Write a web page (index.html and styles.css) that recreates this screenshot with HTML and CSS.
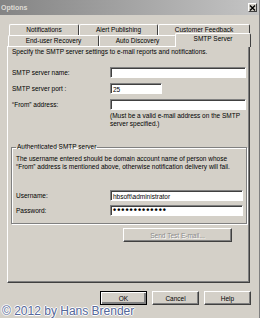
FILE: index.html
```html
<!DOCTYPE html>
<html lang="en">
  <head>
    <meta charset="UTF-8" />
    <title>Options</title>
    <link rel="stylesheet" href="styles.css">
  </head>
  <body>
    <div class="window">
      <div class="titlebar">
        <span class="title">Options</span>
        <span class="close-btn">
          <svg width="7" height="6" viewBox="0 0 7 6">
            <path d="M1 0.5 L6 5.5 M6 0.5 L1 5.5" stroke="#000" stroke-width="1.4" />
          </svg>
        </span>
      </div>

      <div class="tabs">
        <div class="tab-row tab-row-back">
          <div class="tab tab-notify">Notifications</div>
          <div class="tab tab-alert">Alert Publishing</div>
          <div class="tab tab-feedback">Customer Feedback</div>
        </div>
        <div class="tab-row tab-row-front">
          <div class="tab tab-recovery">End-user Recovery</div>
          <div class="tab tab-discovery">Auto Discovery</div>
          <div class="tab tab-smtp active">SMTP Server</div>
        </div>
      </div>

      <div class="panel">
        <p class="desc">Specify the SMTP server settings to e-mail reports and notifications.</p>

        <div class="form">
          <div class="form-row">
            <label class="form-label">SMTP server name:</label>
            <div class="field field-wide"></div>
          </div>
          <div class="form-row">
            <label class="form-label">SMTP server port :</label>
            <div class="field field-port">25</div>
          </div>
          <div class="form-row">
            <label class="form-label">&ldquo;From&rdquo; address:</label>
            <div class="field field-wide"></div>
          </div>
          <p class="note">(Must be a valid e-mail address on the SMTP<br />server specified.)</p>
        </div>

        <fieldset class="group">
          <legend>Authenticated SMTP server</legend>
          <p class="group-text">
            The username entered should be domain account name of person whose<br />
            &ldquo;From&rdquo; address is mentioned above, otherwise notification delivery will fail.
          </p>
          <div class="group-rows">
            <div class="form-row">
              <label class="form-label group-label">Username:</label>
              <div class="field field-auth">hbsoft\administrator</div>
            </div>
            <div class="form-row">
              <label class="form-label group-label">Password:</label>
              <div class="field field-auth dots">&bull;&bull;&bull;&bull;&bull;&bull;&bull;&bull;&bull;&bull;&bull;&bull;&bull;</div>
            </div>
          </div>
        </fieldset>

        <button class="btn btn-test" disabled>Send Test E-mail...</button>
      </div>

      <div class="actions">
        <button class="btn btn-default">OK</button>
        <button class="btn">Cancel</button>
        <button class="btn">Help</button>
      </div>

      <div class="watermark">&copy; 2012 by Hans Brender</div>
    </div>
  </body>
</html>
```

FILE: styles.css
```css
* {
  padding: 0;
  margin: 0;
  box-sizing: border-box;
}
html,
body {
  font-family: "Liberation Sans", Arial, sans-serif;
  font-size: 6.5px;
  background-color: #d4d0c8;
}

.window {
  position: relative;
  width: 260px;
  height: 318px;
  background-color: #d4d0c8;
  border-right: 1px solid #808080;
  overflow: hidden;
}

.titlebar {
  height: 15px;
  display: flex;
  align-items: center;
  justify-content: space-between;
  padding: 0 2px 0 1px;
  background: linear-gradient(to right, #848484, #c4c4c4);
}
.title {
  font-size: 7px;
  font-weight: bold;
  color: #dedbd5;
}
.close-btn {
  width: 9px;
  height: 9px;
  display: flex;
  align-items: center;
  justify-content: center;
  background-color: #d4d0c8;
  border: 1px solid;
  border-color: #fff #404040 #404040 #fff;
}

/* tabs */
.tabs {
  margin-top: 9px;
}
.tab-row {
  display: flex;
  height: 11px;
}
.tab-row-back {
  padding-left: 9px;
}
.tab-row-front {
  padding-left: 8px;
}
.tab {
  display: flex;
  align-items: center;
  justify-content: center;
  height: 11px;
  background-color: #d4d0c8;
  border-top: 1px solid #fff;
  border-left: 1px solid #fff;
  border-right: 1px solid #404040;
  border-radius: 2px 2px 0 0;
  line-height: 1;
}
.tab-notify { width: 70px; }
.tab-alert { width: 79px; }
.tab-feedback { width: 92px; }
.tab-recovery { width: 91px; }
.tab-discovery { width: 77px; }
.tab-smtp { width: 76px; }
.tab.active {
  position: relative;
  z-index: 2;
  height: 14px;
  margin-top: -2px;
  margin-left: -1px;
  padding-bottom: 2px;
}

/* panel */
.panel {
  height: 237px;
  margin: 0 9px 0 7px;
  border: 1px solid;
  border-color: #fff #404040 #404040 #fff;
  box-shadow: inset -1px -1px 0 #808080;
}
.desc {
  margin: 1px 0 0 4px;
  line-height: 8px;
}

.form {
  margin-top: 11px;
  padding-left: 4px;
}
.form-row {
  display: flex;
  align-items: center;
  height: 11px;
  margin-bottom: 5px;
}
.form-row:last-of-type {
  margin-bottom: 0;
}
.form-label {
  width: 98px;
  line-height: 8px;
}
.field {
  height: 11px;
  padding: 2px 0 0 2px;
  background-color: #fff;
  border: 1px solid;
  border-color: #808080 #fff #fff #808080;
  box-shadow: inset 1px 1px 0 #404040;
  line-height: 7px;
}
.field-wide { width: 136px; }
.field-port { width: 52px; }
.note {
  margin: 2px 0 0 98px;
  line-height: 8px;
}

/* authenticated group */
.group {
  margin: 15px 3px 0 3px;
  padding: 0 3px 3px 4px;
  border: 1px solid #808080;
  box-shadow: 1px 1px 0 #fff, inset 1px 1px 0 #fff;
}
.group legend {
  padding: 0 1px;
  line-height: 8px;
}
.group-text {
  margin-top: 4px;
  line-height: 8px;
}
.group-rows {
  margin-top: 19px;
}
.group-rows .form-row {
  margin-bottom: 4px;
}
.group-label {
  width: 94px;
}
.field-auth {
  width: 133px;
}
.dots {
  font-size: 9px;
  font-weight: bold;
  letter-spacing: 1px;
  padding-top: 0;
  line-height: 8px;
}

/* buttons */
.btn {
  font-family: inherit;
  font-size: 6.5px;
  height: 14px;
  width: 47px;
  background-color: #d4d0c8;
  color: #000;
  border: 1px solid;
  border-color: #fff #404040 #404040 #fff;
  box-shadow: inset -1px -1px 0 #808080;
}
.btn-test {
  display: block;
  width: 109px;
  margin: 4px 0 0 115px;
  color: #8a8a8a;
  text-shadow: 1px 1px 0 #fff;
}
.btn-default {
  border-color: #000;
  box-shadow: inset 1px 1px 0 #fff, inset -2px -2px 0 #808080;
}

.actions {
  display: flex;
  justify-content: flex-end;
  gap: 5px;
  margin-top: 8px;
  padding-right: 8px;
}

.watermark {
  position: absolute;
  left: 2px;
  bottom: 0;
  font-size: 12px;
  line-height: 13px;
  color: #54679a;
  text-shadow: 1px 0 0 #fff, -1px 0 0 #fff, 0 1px 0 #fff, 0 -1px 0 #fff;
}
```
